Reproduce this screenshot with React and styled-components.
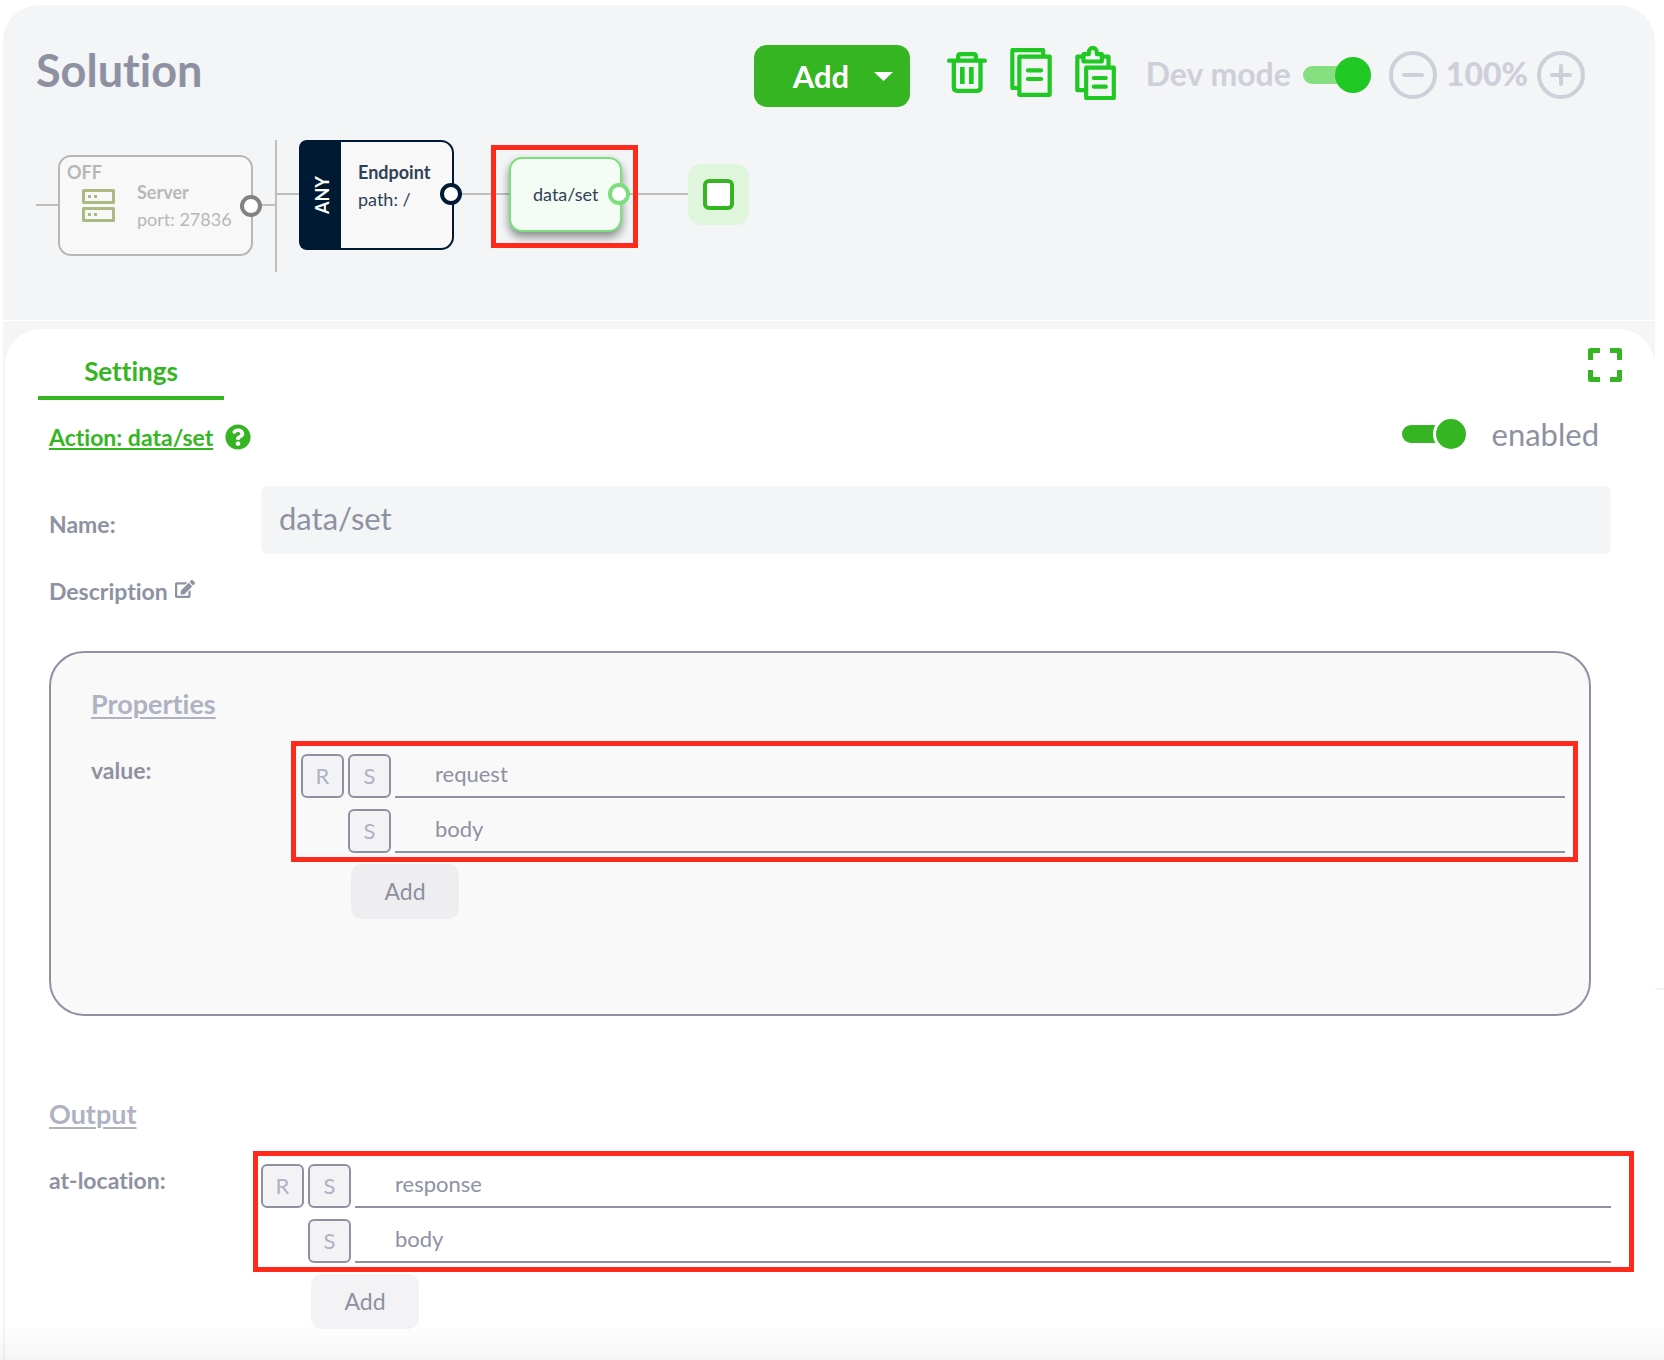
import React from "react";
import styled, { createGlobalStyle, css } from "styled-components";
import { FaQuestionCircle, FaEdit } from "react-icons/fa";

const color = {
  surface: "#f3f5f7",
  green: "#36b522",
  bright: "#1fc822",
  slate: "#8e91a2",
  mist: "#afb2c2",
  pale: "#cfcfda",
  navy: "#001a33",
  wire: "#bfbfbf",
  red: "#ff2a1c",
};

const GlobalStyle = createGlobalStyle`
  *, *::before, *::after { box-sizing: border-box; }
  body {
    margin: 0;
    background: #fff;
    color: ${color.slate};
    font-family: Lato, "Open Sans", sans-serif;
    font-variant-ligatures: none;
  }
  button, input { font-family: inherit; font-variant-ligatures: none; margin: 0; }
  button { border: 0; padding: 0; background: none; cursor: pointer; }
  svg { display: block; }
`;

const Shell = styled.main`
  position: relative;
  display: flex;
  flex-direction: column;
  min-height: calc(100vh - 5px);
  margin: 5px 9px 0 3px;
  border-radius: 36px 36px 0 0;
  background: ${color.surface};
`;

const EdgeTick = styled.i`
  position: absolute;
  top: 983px;
  right: -9px;
  width: 9px;
  height: 2px;
  background: #f3f3f4;
`;

const Header = styled.header`
  display: flex;
  align-items: center;
  justify-content: space-between;
  padding: 40px 70px 0 33px;
`;

const Title = styled.h1`
  margin: 0;
  padding-bottom: 12px;
  font-size: 45px;
  line-height: 50px;
  font-weight: 700;
`;

const Toolbar = styled.div`
  display: flex;
  align-items: center;
`;

const AddMenuButton = styled.button`
  display: flex;
  align-items: center;
  justify-content: space-between;
  width: 156px;
  height: 62px;
  padding: 0 17px 0 39px;
  margin-right: 37px;
  border-radius: 13px;
  background: ${color.green};
  color: #fff;
  font-size: 31px;
  font-weight: 700;
`;

const IconGroup = styled.div`
  display: flex;
  align-items: center;
  gap: 23px;
  margin-right: 30px;
  padding-bottom: 7px;
`;

const ViewControls = styled.div`
  display: flex;
  align-items: center;
  padding-bottom: 3px;
  color: ${color.pale};
  font-size: 32px;
  line-height: 36px;
  font-weight: 700;
`;

const ToolLabel = styled.label`
  margin-right: 12px;
  padding-bottom: 2px;
`;

const ZoomGroup = styled.div`
  display: flex;
  align-items: center;
  gap: 9px;
  margin-left: 18px;
  b { padding-bottom: 2px; }
`;

const Switch = styled.input.attrs({ type: "checkbox", role: "switch" })`
  appearance: none;
  display: grid;
  align-items: center;
  flex: none;
  width: ${(p) => p.$width}px;
  height: 36px;
  cursor: pointer;

  &::before,
  &::after {
    content: "";
    grid-area: 1 / 1;
  }
  &::before {
    height: 18px;
    margin-right: 12px;
    border-radius: 9px;
    background: ${(p) => p.$track};
  }
  &::after {
    width: ${(p) => p.$knob}px;
    height: ${(p) => p.$knob}px;
    border-radius: 50%;
    background: ${(p) => p.$color};
    box-shadow: 0 0 0 ${(p) => p.$ring || 0}px #fff;
  }
  &:checked::after {
    justify-self: end;
  }
`;

const Canvas = styled.section`
  position: relative;
  height: 213px;
  overflow: hidden;
`;

const placed = css`
  position: absolute;
  left: ${(p) => p.$x}px;
  top: ${(p) => p.$y}px;
`;

const Wire = styled.i`
  ${placed}
  width: ${(p) => p.$w || 2}px;
  height: ${(p) => p.$h || 2}px;
  background: ${color.wire};
`;

const Node = styled.article`
  ${placed}
  display: flex;
  width: ${(p) => p.$w}px;
  height: ${(p) => p.$h}px;
  border: 2px solid ${(p) => p.$line};
  border-radius: 13px;
  background: ${(p) => p.$fill || "#f8f8f8"};
  color: ${(p) => p.$ink || "#2f4156"};
  font-size: 18px;
  line-height: 27px;
`;

const ServerNode = styled(Node)`
  padding: 22px 0 0 22px;
  gap: 22px;
  svg { margin-top: 10px; }
`;

const EndpointNode = styled(Node)`
  border-radius: 8px 13px 13px 8px;
`;

const ActionNode = styled(Node)`
  align-items: center;
  padding-left: 22px;
  box-shadow: 0 5px 10px rgba(0, 0, 0, 0.45);
`;

const NodeText = styled.div`
  padding: ${(p) => p.$pad || 0};
  p { margin: 0; }
  h2 { margin: 0; font-size: inherit; font-weight: 700; }
`;

const Status = styled.span`
  position: absolute;
  top: 3px;
  left: 7px;
  line-height: 24px;
  font-weight: 700;
`;

const Method = styled.span`
  display: flex;
  align-items: center;
  justify-content: center;
  width: 40px;
  padding-right: 3px;
  background: ${color.navy};
  color: #fff;
  font-weight: 700;
  writing-mode: vertical-rl;
  transform: rotate(180deg);
`;

const Port = styled.i`
  ${placed}
  width: 22px;
  height: 22px;
  border: 4px solid ${(p) => p.$line};
  border-radius: 50%;
  background: #fff;
`;

const EndNode = styled.div`
  ${placed}
  display: grid;
  place-items: center;
  width: 61px;
  height: 61px;
  border-radius: 13px;
  background: #dff5dc;
  i {
    width: 31px;
    height: 31px;
    border: 4px solid ${color.green};
    border-radius: 6px;
    background: #fff;
  }
`;

const NodeHighlight = styled.div`
  ${placed}
  width: ${(p) => p.$w}px;
  height: ${(p) => p.$h}px;
  border: 5px solid ${color.red};
  pointer-events: none;
`;

const Drawer = styled.section`
  flex: 1;
  margin: 9px 0 0 2px;
  border-radius: 36px 36px 0 0;
  background: #fff;
`;

const Divider = styled.div`
  height: 1px;
  background: #fff;
  margin-bottom: -1px;
`;

const TabBar = styled.div`
  display: flex;
  align-items: center;
  justify-content: space-between;
  padding: 0 33px;
`;

const Tab = styled.button`
  min-width: 186px;
  height: 71px;
  padding-top: 16px;
  border-bottom: 4px solid ${color.green};
  color: ${color.green};
  font-size: 26px;
  font-weight: 700;
`;

const Body = styled.div`
  padding: 0 44px 31px;
`;

const ActionBar = styled.div`
  display: flex;
  align-items: center;
  justify-content: space-between;
  height: 72px;
  margin-bottom: 14px;
`;

const ActionTitle = styled.div`
  display: flex;
  align-items: center;
  gap: 12px;
  padding-top: 2px;
  color: ${color.green};
`;

const ActionLink = styled.a`
  color: ${color.green};
  font-size: 23px;
  line-height: 28px;
  font-weight: 700;
  text-decoration: underline;
  text-decoration-thickness: 2px;
  text-underline-offset: 2px;
`;

const EnabledField = styled.div`
  display: flex;
  align-items: center;
  gap: 26px;
  padding: 0 12px 5px 0;
  font-size: 31px;
  line-height: 36px;
`;

const FieldGrid = styled.div`
  display: grid;
  grid-template-columns: ${(p) => p.$label || 212}px 1fr;
  align-items: ${(p) => p.$align || "center"};
`;

const FieldLabel = styled.label`
  font-size: 23px;
  line-height: 28px;
  font-weight: 700;
  padding-top: ${(p) => p.$drop || 0}px;
`;

const NameInput = styled.input`
  width: 100%;
  height: 68px;
  padding: 0 18px 4px;
  border: 0;
  border-radius: 7px;
  background: ${color.surface};
  color: ${color.slate};
  font-size: 31px;
`;

const DescriptionButton = styled.button`
  display: flex;
  align-items: center;
  gap: 7px;
  height: 74px;
  margin-bottom: 23px;
  color: ${color.slate};
  font-size: 23px;
  font-weight: 700;
  svg { margin-bottom: 5px; }
`;

const SectionTitle = styled.h3`
  margin: 0 0 24px;
  color: ${color.mist};
  font-size: 27px;
  line-height: 32px;
  font-weight: 700;
  text-decoration: underline;
  text-decoration-thickness: 2px;
  text-underline-offset: 3px;
`;

const PropertiesPanel = styled.section`
  min-height: 365px;
  margin-right: 20px;
  padding: 35px 24px 0 40px;
  border: 2px solid ${color.slate};
  border-radius: 35px;
  background: #f9f9f9;
`;

const OutputPanel = styled.section`
  padding-top: 82px;
`;

const PathEditor = styled.div`
  padding-top: 10px;
`;

const PathRows = styled.div`
  position: relative;
  display: grid;
  gap: 11px;
`;

const PathHighlight = styled.div`
  position: absolute;
  inset: ${(p) => p.$inset};
  border: 5px solid ${color.red};
  pointer-events: none;
`;

const PathRow = styled.div`
  display: grid;
  grid-template-columns: 43px 43px 1fr;
  gap: 4px;
  height: 44px;
`;

const TypeButton = styled.button`
  grid-column: ${(p) => p.$col};
  padding-bottom: 2px;
  border: 2px solid ${color.slate};
  border-radius: 6px;
  background: #f3f3f6;
  color: ${color.mist};
  font-size: 22px;
`;

const PathInput = styled.input`
  grid-column: 3;
  min-width: 0;
  padding: 0 40px 3px;
  border: 0;
  border-bottom: 2px solid ${color.slate};
  background: transparent;
  color: ${color.slate};
  font-size: 22px;
`;

const AddButton = styled.button`
  width: 108px;
  height: 55px;
  margin: 11px 0 0 50px;
  padding-bottom: 2px;
  border-radius: 11px;
  background: ${(p) => p.$fill};
  color: ${color.slate};
  font-size: 23px;
`;

const BottomFade = styled.div`
  position: fixed;
  inset: auto 0 0 0;
  height: 36px;
  background: linear-gradient(rgba(0, 0, 0, 0), rgba(0, 0, 0, 0.04));
  pointer-events: none;
`;

const TrashIcon = () => (
  <svg width="40" height="41" viewBox="618 96 120 123" fill="none" stroke={color.bright} strokeWidth="13" strokeLinecap="round" strokeLinejoin="round">
    <path d="M624.5 122H731.5M651.5 120V109q0-6.500 6.500-6.500H698q6.500 0 6.500 6.500V120M638.500 123V202q0 10.500 10.500 10.500H708q10.500 0 10.500-10.500V123" />
    <path d="M664 141V192M691 141V192" strokeLinecap="butt" strokeWidth="14" />
  </svg>
);

const CopyIcon = () => (
  <svg width="42" height="49" viewBox="798 84 125 147" fill="none" stroke={color.bright} strokeWidth="12.5" strokeLinecap="round" strokeLinejoin="round">
    <path d="M825.500 110H916.500V224.500H825.500ZM851 151H891M851 177H891" />
    <path d="M821 204H804.500V90.500H897V106" />
  </svg>
);

const PasteIcon = () => (
  <svg width="41" height="54" viewBox="1004 75 122 162" fill="none" stroke={color.bright} strokeWidth="12.5" strokeLinejoin="round">
    <path d="M1037 140H1120V231H1037Z" />
    <path d="M1060 171H1096M1060 197H1096" strokeLinecap="round" />
    <path d="M1034 207.500H1010.500V107H1028M1086 107H1104V136" />
    <path d="M1029 99.500V121.500H1084V99.500H1069V93a12 12 0 0 0-24 0V99.500Z" />
  </svg>
);

const ZoomIcon = ({ plus }) => (
  <svg width="48" height="48" viewBox="0 0 48 48" fill="none" stroke={color.pale} strokeWidth="4" strokeLinecap="round">
    <circle cx="24" cy="24" r="22" />
    <path d={plus ? "M15 24H33M24 15V33" : "M15 24H33"} />
  </svg>
);

const ServerIcon = () => (
  <svg width="33" height="33" viewBox="0 0 33 33" fill="none" stroke="#abba82" strokeWidth="3" strokeLinejoin="round">
    <path d="M1.500 1.500H31.500V13.500H1.500ZM1.500 19.500H31.500V31.500H1.500Z" />
    <path d="M6 7.500H9M12 7.500H15M6 25.500H9M12 25.500H15" />
  </svg>
);

const ExpandIcon = () => (
  <svg width="34" height="34" viewBox="0 0 34 34" fill="none" stroke={color.green} strokeWidth="5" strokeLinejoin="round">
    <path d="M12 2.500H2.500V12M22 2.500H31.500V12M12 31.500H2.500V22M22 31.500H31.500V22" />
  </svg>
);

const CaretIcon = () => (
  <svg width="19" height="9" viewBox="0 0 19 9" fill="#fff">
    <path d="M0 0H19L9.500 9Z" />
  </svg>
);

function PathField({ id, root, inset, fill }) {
  return (
    <PathEditor>
      <PathRows>
        <PathRow>
          <TypeButton $col={1} type="button">R</TypeButton>
          <TypeButton $col={2} type="button">S</TypeButton>
          <PathInput id={id} defaultValue={root} />
        </PathRow>
        <PathRow>
          <TypeButton $col={2} type="button">S</TypeButton>
          <PathInput aria-labelledby={`${id}-label`} defaultValue="body" />
        </PathRow>
        <PathHighlight $inset={inset} />
      </PathRows>
      <AddButton type="button" $fill={fill}>Add</AddButton>
    </PathEditor>
  );
}

export default function App() {
  return (
    <>
      <GlobalStyle />
      <Shell>
        <Header>
          <Title>Solution</Title>
          <Toolbar>
            <AddMenuButton type="button">Add<CaretIcon /></AddMenuButton>
            <IconGroup>
              <button type="button" aria-label="Delete"><TrashIcon /></button>
              <button type="button" aria-label="Copy"><CopyIcon /></button>
              <button type="button" aria-label="Paste"><PasteIcon /></button>
            </IconGroup>
            <ViewControls>
              <ToolLabel htmlFor="dev-mode">Dev mode</ToolLabel>
              <Switch id="dev-mode" defaultChecked $width={68} $knob={36} $color={color.bright} $track="#86df7f" />
              <ZoomGroup>
                <button type="button" aria-label="Zoom out"><ZoomIcon /></button>
                <b>100%</b>
                <button type="button" aria-label="Zoom in"><ZoomIcon plus /></button>
              </ZoomGroup>
            </ViewControls>
          </Toolbar>
        </Header>

        <Canvas>
          <Wire $x={33} $y={97} $w={22} />
          <Wire $x={250} $y={97} $w={22} />
          <Wire $x={272} $y={33} $h={132} />
          <Wire $x={274} $y={86} $w={22} />
          <Wire $x={451} $y={86} $w={56} />
          <Wire $x={619} $y={86} $w={66} />

          <ServerNode $x={55} $y={48} $w={195} $h={101} $line="#b7b7b7" $ink="#b7b7b7">
            <Status>OFF</Status>
            <ServerIcon />
            <NodeText>
              <h2>Server</h2>
              <p>port: 27836</p>
            </NodeText>
          </ServerNode>
          <Port $x={237} $y={88} $line="#828282" />

          <EndpointNode $x={296} $y={33} $w={155} $h={110} $line={color.navy}>
            <Method>ANY</Method>
            <NodeText $pad="17px 0 0 17px">
              <h2>Endpoint</h2>
              <p>path: /</p>
            </NodeText>
          </EndpointNode>
          <Port $x={437} $y={76} $line={color.navy} />

          <ActionNode $x={506} $y={50} $w={113} $h={75} $line="#7bdf7b" $fill="#f5fcf5">
            <NodeText>data/set</NodeText>
          </ActionNode>
          <Port $x={605} $y={76} $line="#7bdf7b" />
          <NodeHighlight $x={488} $y={38} $w={147} $h={103} />

          <EndNode $x={685} $y={57}><i /></EndNode>
        </Canvas>
        <Divider />

        <Drawer>
          <TabBar>
            <Tab type="button">Settings</Tab>
            <button type="button" aria-label="Expand"><ExpandIcon /></button>
          </TabBar>
          <Body>
            <ActionBar>
              <ActionTitle>
                <ActionLink href="#action">Action: data/set</ActionLink>
                <FaQuestionCircle size={26} />
              </ActionTitle>
              <EnabledField>
                <Switch id="enabled" defaultChecked $width={64} $knob={30} $ring={3} $color={color.green} $track={color.green} />
                <label htmlFor="enabled">enabled</label>
              </EnabledField>
            </ActionBar>

            <FieldGrid>
              <FieldLabel htmlFor="name" $drop={8}>Name:</FieldLabel>
              <NameInput id="name" defaultValue="data/set" />
            </FieldGrid>
            <DescriptionButton type="button">Description<FaEdit size={20} /></DescriptionButton>

            <PropertiesPanel>
              <SectionTitle>Properties</SectionTitle>
              <FieldGrid $align="start" $label={210}>
                <FieldLabel id="value-label" htmlFor="value" $drop={12}>value:</FieldLabel>
                <PathField id="value" root="request" inset="-13px -13px -9px -10px" fill="#eeeef0" />
              </FieldGrid>
            </PropertiesPanel>

            <OutputPanel>
              <SectionTitle>Output</SectionTitle>
              <FieldGrid $align="start">
                <FieldLabel id="location-label" htmlFor="location" $drop={12}>at-location:</FieldLabel>
                <PathField id="location" root="response" inset="-13px -23px -9px -8px" fill="#f3f3f5" />
              </FieldGrid>
            </OutputPanel>
          </Body>
        </Drawer>
        <EdgeTick />
      </Shell>
      <BottomFade />
    </>
  );
}
